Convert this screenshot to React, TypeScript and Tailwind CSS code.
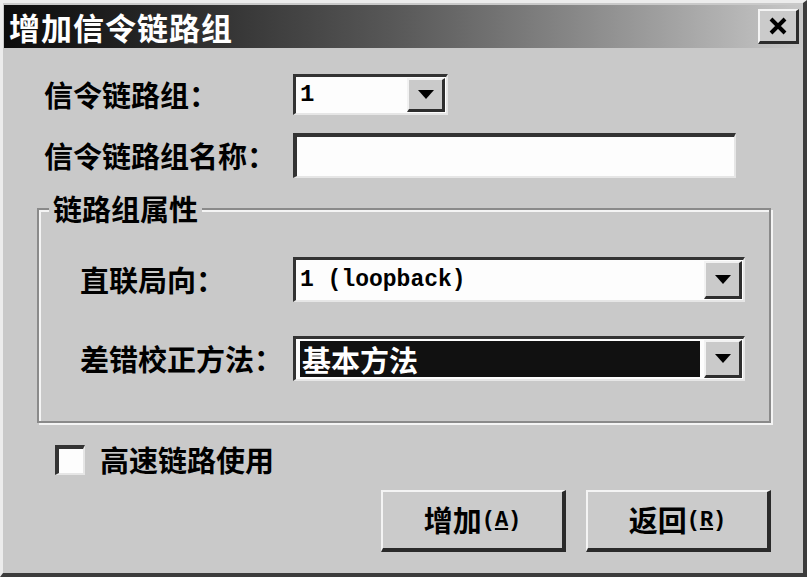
import type { ReactNode } from 'react';

const cjk = "font-['Noto_Sans_CJK_SC',sans-serif]";
const mono = "font-['Liberation_Mono','Noto_Sans_CJK_SC',monospace]";

function DownArrow() {
  return (
    <svg width="16" height="9" viewBox="0 0 16 9">
      <path d="M0 0 H16 L8 9 Z" fill="#000" />
    </svg>
  );
}

function ArrowButton() {
  return (
    <div className="flex h-full w-[38px] items-center justify-center border-t-2 border-l-2 border-t-[#f2f2f2] border-l-[#f2f2f2] border-r-[3px] border-b-[3px] border-r-[#2e2e2e] border-b-[#2e2e2e] bg-[#cacaca]">
      <DownArrow />
    </div>
  );
}

interface ComboProps {
  width: string;
  height: string;
  children: ReactNode;
}

function Combo({ width, height, children }: ComboProps) {
  return (
    <div
      className={`flex ${width} ${height} border-t-[3px] border-l-[3px] border-t-[#333] border-l-[#333] border-r-2 border-b-2 border-r-[#e6e6e6] border-b-[#e6e6e6] bg-[#fdfdfd] p-[1px]`}
    >
      <div className="flex min-w-0 flex-1 items-center pl-[3px]">{children}</div>
      <ArrowButton />
    </div>
  );
}

function RaisedButton({ label, hotkey }: { label: string; hotkey: string }) {
  return (
    <button className="flex h-[62px] w-[185px] items-center justify-center border-t-2 border-l-2 border-t-[#f4f4f4] border-l-[#f4f4f4] border-r-[4px] border-b-[4px] border-r-[#2a2a2a] border-b-[#2a2a2a] bg-[#cbcbcb] text-[29px] font-semibold text-black">
      <span className={cjk}>{label}</span>
      <span className={`${mono} text-[22px] font-bold`}>
        (<span className="underline underline-offset-2">{hotkey}</span>)
      </span>
    </button>
  );
}

export default function App() {
  return (
    <div
      className={`${cjk} flex h-[577px] w-[807px] flex-col border-t-[3px] border-l-[3px] border-t-[#ececec] border-l-[#ececec] border-r-[4px] border-b-[4px] border-r-[#3c3c3c] border-b-[#3c3c3c] bg-[#c9c9c9] px-[1px] pt-[2px] text-black`}
    >
      <div className="flex h-[43px] items-center justify-between bg-linear-to-r from-[#0c0c0c] via-[#5a5a5a] to-[#c8c8c8] pl-[5px] pr-[3px]">
        <span className="text-[31px] font-bold leading-none tracking-[1px] text-white">增加信令链路组</span>
        <div className="flex h-[35px] w-[41px] items-center justify-center border-t-2 border-l-2 border-t-[#f4f4f4] border-l-[#f4f4f4] border-r-[3px] border-b-[3px] border-r-[#2c2c2c] border-b-[#2c2c2c] bg-[#cbcbcb]">
          <svg width="20" height="18" viewBox="0 0 20 18">
            <path d="M3 2 L17 16 M17 2 L3 16" stroke="#000" strokeWidth="4" />
          </svg>
        </div>
      </div>

      <div className="mt-[26px] flex h-[41px] items-center pl-[40px]">
        <span className="w-[249px] text-[29px] font-semibold">信令链路组：</span>
        <Combo width="w-[155px]" height="h-[41px]">
          <span className={`${mono} text-[24px] font-bold`}>1</span>
        </Combo>
      </div>

      <div className="mt-[18px] flex h-[45px] items-center pl-[40px]">
        <span className="w-[249px] text-[29px] font-semibold">信令链路组名称：</span>
        <div className="h-[45px] w-[443px] border-t-[4px] border-l-[4px] border-t-[#333] border-l-[#333] border-r-2 border-b-2 border-r-[#e6e6e6] border-b-[#e6e6e6] bg-[#fdfdfd]" />
      </div>

      <div className="relative ml-[33px] mt-[30px] h-[215px] w-[734px] border-2 border-[#8a8a8a] shadow-[inset_2px_2px_0_#f4f4f4,2px_2px_0_#f4f4f4]">
        <span className="absolute left-[10px] top-[-18px] bg-[#c9c9c9] px-[4px] text-[29px] font-semibold leading-[32px]">
          链路组属性
        </span>

        <div className="mt-[47px] flex h-[45px] items-center pl-[41px]">
          <span className="w-[213px] text-[29px] font-semibold">直联局向：</span>
          <Combo width="w-[452px]" height="h-[45px]">
            <span className={`${mono} text-[23px] font-bold`}>1 (loopback)</span>
          </Combo>
        </div>

        <div className="mt-[34px] flex h-[45px] items-center pl-[41px]">
          <span className="w-[213px] text-[29px] font-semibold">差错校正方法：</span>
          <Combo width="w-[452px]" height="h-[45px]">
            <div className="mr-[4px] flex h-[36px] flex-1 items-center bg-[#111] pl-[2px] text-[29px] font-semibold leading-none text-white">
              基本方法
            </div>
          </Combo>
        </div>
      </div>

      <div className="ml-[51px] mt-[22px] flex h-[30px] items-center">
        <div className="h-[30px] w-[30px] border-t-[4px] border-l-[4px] border-t-[#333] border-l-[#333] border-r-2 border-b-2 border-r-[#e6e6e6] border-b-[#e6e6e6] bg-[#fdfdfd]" />
        <span className="ml-[15px] text-[29px] font-semibold">高速链路使用</span>
      </div>

      <div className="mt-[15px] flex justify-end gap-[20px] pr-[31px]">
        <RaisedButton label="增加" hotkey="A" />
        <RaisedButton label="返回" hotkey="R" />
      </div>
    </div>
  );
}
